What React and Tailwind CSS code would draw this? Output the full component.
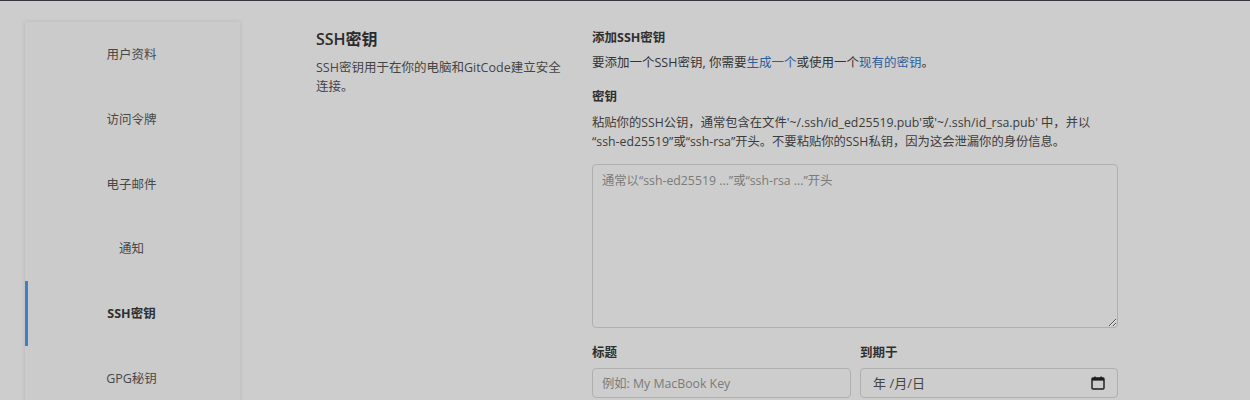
const font = {
  fontFamily: '"Open Sans", "Noto Sans CJK SC", sans-serif',
};

const menu = ["用户资料", "访问令牌", "电子邮件", "通知", "SSH密钥", "GPG秘钥"];

const App = () => {
  return (
    <div
      style={font}
      className="h-[400px] overflow-hidden bg-[#cdcdcd] border-t border-[#33363a] text-[12.5px] text-[#333]"
    >
      <div className="flex pl-[25px] pt-[21px]">
        <aside className="w-[215px] h-[420px] shrink-0 bg-[#cbcbcb] shadow-[0_0_4px_rgba(0,0,0,0.12)]">
          {menu.map((item) => (
            <div
              key={item}
              className={`h-[64.8px] pt-[2px] flex items-center justify-center border-l-[3px] pr-[5px] ${
                item === "SSH密钥"
                  ? "border-[#3f7fc4] font-bold text-[#2f2f2f]"
                  : "border-transparent text-[#484848]"
              }`}
            >
              {item}
            </div>
          ))}
        </aside>

        <section className="w-[250px] ml-[76px] shrink-0 pt-[5px]">
          <h2 className="text-[16px] leading-[24px] font-semibold text-[#2b2b2b]">SSH密钥</h2>
          <p className="mt-[7px] text-[12.5px] leading-[19px] text-[#444]">
            SSH密钥用于在你的电脑和GitCode建立安全连接。
          </p>
        </section>

        <section className="w-[526px] ml-[26px] shrink-0 pt-[6px]">
          <h3 className="font-bold text-[12.5px] leading-[20px] text-[#2f2f2f]">添加SSH密钥</h3>
          <p className="mt-[5px] leading-[20px]">
            要添加一个SSH密钥, 你需要<span className="text-[#2a5f9e]">生成一个</span>或使用一个
            <span className="text-[#2a5f9e]">现有的密钥</span>。
          </p>
          <h3 className="mt-[14px] font-bold text-[12.5px] leading-[20px] text-[#2f2f2f]">密钥</h3>
          <p className="mt-[6px] text-[12.3px] leading-[19px] text-[#3c3c3c]">
            粘贴你的SSH公钥，通常包含在文件'~/.ssh/id_ed25519.pub'或'~/.ssh/id_rsa.pub' 中，并以
            <br />
            “ssh-ed25519”或“ssh-rsa”开头。不要粘贴你的SSH私钥，因为这会泄漏你的身份信息。
          </p>
          <textarea
            className="mt-[13px] block w-full h-[164px] px-[9px] py-[6px] bg-[#cdcdcd] border border-[#b0b0b0] rounded-[4px] text-[12.3px] leading-[19px] placeholder:text-[#7b7b7b] outline-none"
            placeholder="通常以“ssh-ed25519 ...”或“ssh-rsa ...”开头"
          />
          <div className="mt-[15px] flex gap-[9px]">
            <div className="w-[259px]">
              <label className="block font-bold text-[12.5px] leading-[20px] text-[#2f2f2f]">标题</label>
              <input
                className="mt-[5px] block w-full h-[30px] px-[9px] pt-[1px] bg-[#cdcdcd] border border-[#b0b0b0] rounded-[4px] text-[12.3px] placeholder:text-[#7b7b7b] outline-none"
                placeholder="例如: My MacBook Key"
              />
            </div>
            <div className="w-[258px]">
              <label className="block font-bold text-[12.5px] leading-[20px] text-[#2f2f2f]">到期于</label>
              <div className="mt-[5px] h-[30px] pl-[12px] pr-[12px] flex items-center justify-between border border-[#b0b0b0] rounded-[4px] text-[13px] text-[#444]">
                <span className="pt-[1px]">年 /月/日</span>
                <svg width="14" height="14" viewBox="0 0 14 14" fill="none">
                  <rect x="1" y="2" width="12" height="11" rx="1" stroke="#1c1c1c" strokeWidth="1.4" />
                  <rect x="1" y="2" width="12" height="2.6" fill="#1c1c1c" />
                  <rect x="3.2" y="0.5" width="1.4" height="2" fill="#1c1c1c" />
                  <rect x="9.4" y="0.5" width="1.4" height="2" fill="#1c1c1c" />
                </svg>
              </div>
            </div>
          </div>
        </section>
      </div>
    </div>
  );
};

export default App;
